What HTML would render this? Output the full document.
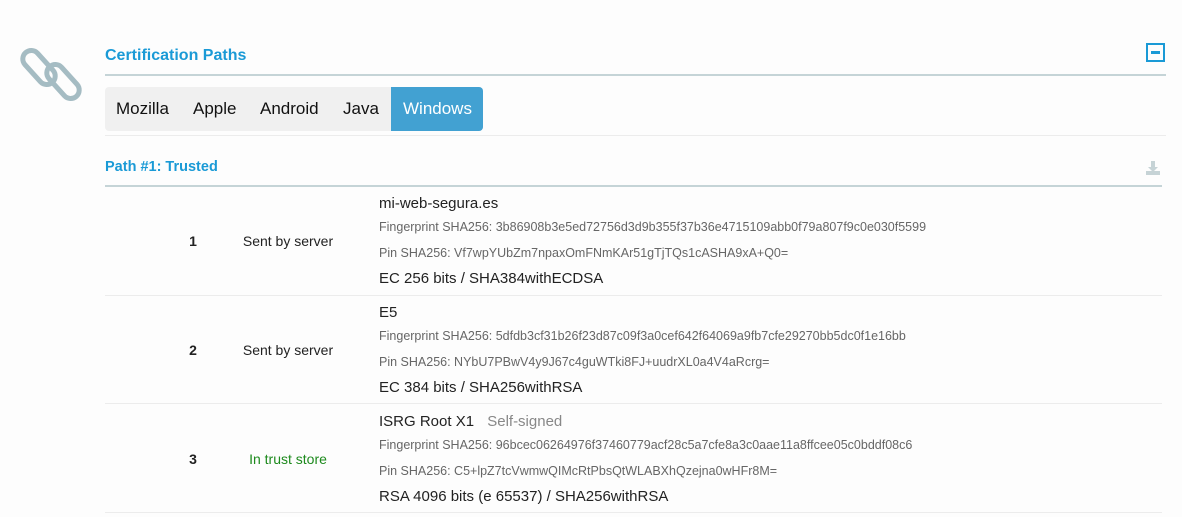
<!DOCTYPE html>
<html><head><meta charset="utf-8"><style>
body{margin:0;width:1182px;height:517px;background:#fdfdfd;font-family:"Liberation Sans",Arial,sans-serif;position:relative;overflow:hidden}
.a{position:absolute}
.h{color:#1a9ad6;font-weight:bold}
.tab{position:absolute;top:87px;height:44px;line-height:44px;font-size:17px;color:#111}
.num{position:absolute;width:20px;text-align:center;font-weight:bold;font-size:14px;color:#222}
.st{position:absolute;width:140px;text-align:center;font-size:14px;color:#222}
.name{position:absolute;left:379px;font-size:15px;color:#222}
.fp{position:absolute;left:379px;font-size:12.5px;color:#666}
.alg{position:absolute;left:379px;font-size:15px;color:#222}
.sep{position:absolute;left:105px;width:1057px;height:1px;background:#ececec}
</style></head><body>
<svg class="a" style="left:16px;top:44px" width="72" height="64" viewBox="0 0 72 64">
<g fill="none" stroke="#a5bcc3" stroke-width="5">
<rect x="3" y="15" width="40" height="17" rx="8.5" transform="rotate(48 23 23.5)"/>
<rect x="27" y="29" width="40" height="17" rx="8.5" transform="rotate(48 47 37.5)"/>
</g></svg>
<div class="a h" style="left:105px;top:47px;font-size:16px">Certification Paths</div>
<div class="a" style="left:1146px;top:43px;width:19px;height:19px;border:2px solid #1a9ad6;box-sizing:border-box"><div style="position:absolute;left:3px;top:6px;width:9px;height:3px;background:#1a9ad6"></div></div>
<div class="a" style="left:105px;top:74px;width:1061px;height:2px;background:#c5d4d7"></div>
<div class="a" style="left:105px;top:87px;width:378px;height:44px;background:#f0f0f0;border-radius:4px"></div>
<div class="a" style="left:391px;top:87px;width:92px;height:44px;background:#42a1d2;border-radius:0 4px 4px 0"></div>
<div class="tab" style="left:116px">Mozilla</div>
<div class="tab" style="left:193px">Apple</div>
<div class="tab" style="left:260px">Android</div>
<div class="tab" style="left:343px">Java</div>
<div class="tab" style="left:403px;color:#fff">Windows</div>
<div class="a" style="left:105px;top:135px;width:1061px;height:1px;background:#ececec"></div>
<div class="a h" style="left:105px;top:159px;font-size:14.5px">Path #1: Trusted</div>
<svg class="a" style="left:1145px;top:160px" width="16" height="16" viewBox="0 0 16 16"><path d="M6 1h4v6h3l-5 5-5-5h3z" fill="#c6d3d6"/><rect x="1" y="11" width="14" height="4" fill="#c6d3d6"/></svg>
<div class="a" style="left:105px;top:185px;width:1057px;height:2px;background:#c5d4d7"></div>

<div class="num" style="left:183px;top:233px">1</div>
<div class="st" style="left:218px;top:233px">Sent by server</div>
<div class="name" style="top:195px">mi-web-segura.es</div>
<div class="fp" style="top:220px">Fingerprint SHA256: 3b86908b3e5ed72756d3d9b355f37b36e4715109abb0f79a807f9c0e030f5599</div>
<div class="fp" style="top:246px">Pin SHA256: Vf7wpYUbZm7npaxOmFNmKAr51gTjTQs1cASHA9xA+Q0=</div>
<div class="alg" style="top:270px">EC 256 bits / SHA384withECDSA</div>
<div class="sep" style="top:295px"></div>

<div class="num" style="left:183px;top:342px">2</div>
<div class="st" style="left:218px;top:342px">Sent by server</div>
<div class="name" style="top:304px">E5</div>
<div class="fp" style="top:329px">Fingerprint SHA256: 5dfdb3cf31b26f23d87c09f3a0cef642f64069a9fb7cfe29270bb5dc0f1e16bb</div>
<div class="fp" style="top:355px">Pin SHA256: NYbU7PBwV4y9J67c4guWTki8FJ+uudrXL0a4V4aRcrg=</div>
<div class="alg" style="top:379px">EC 384 bits / SHA256withRSA</div>
<div class="sep" style="top:403px"></div>

<div class="num" style="left:183px;top:451px">3</div>
<div class="st" style="left:218px;top:451px;color:#1d8a1d">In trust store</div>
<div class="name" style="top:413px">ISRG Root X1 <span style="color:#888;margin-left:9px">Self-signed</span></div>
<div class="fp" style="top:438px">Fingerprint SHA256: 96bcec06264976f37460779acf28c5a7cfe8a3c0aae11a8ffcee05c0bddf08c6</div>
<div class="fp" style="top:464px">Pin SHA256: C5+lpZ7tcVwmwQIMcRtPbsQtWLABXhQzejna0wHFr8M=</div>
<div class="alg" style="top:488px">RSA 4096 bits (e 65537) / SHA256withRSA</div>
<div class="sep" style="top:512px"></div>
</body></html>
